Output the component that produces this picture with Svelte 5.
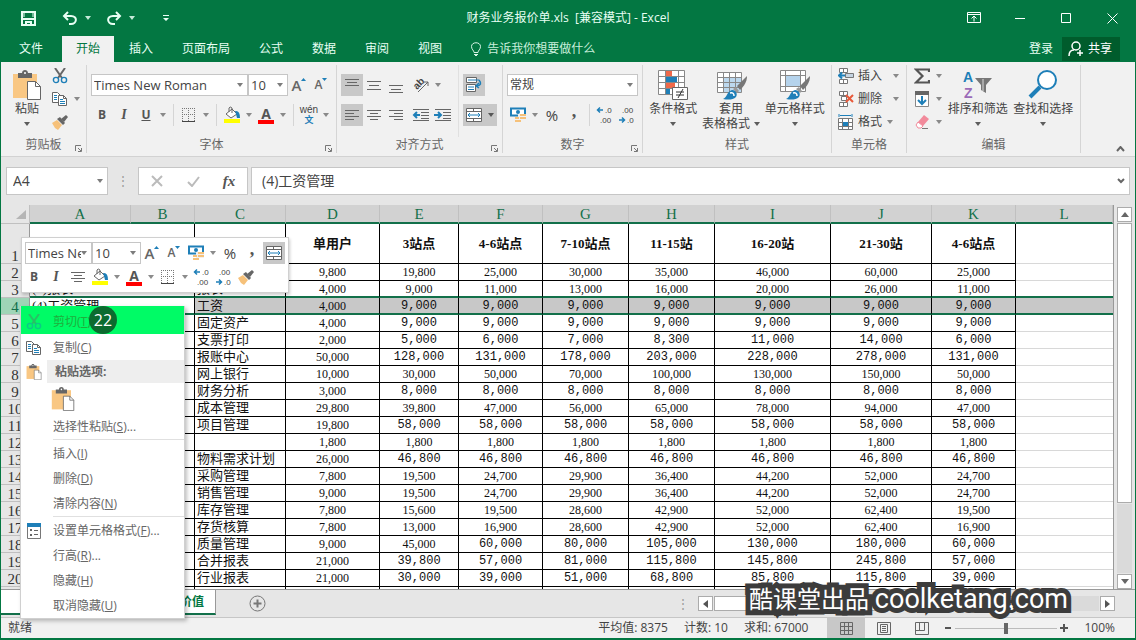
<script>
  let fontName = 'Times New Roman';
  let fontSize = '10';
  let numberFormat = '常规';
  let cellName = 'A4';
  let formula = '(4)工资管理';
  let zoom = 100;

  const tabs = ['文件', '开始', '插入', '页面布局', '公式', '数据', '审阅', '视图'];
  const letters = ['A', 'B', 'C', 'D', 'E', 'F', 'G', 'H', 'I', 'J', 'K', 'L'];
  const colWidths = [101, 64, 91, 94, 79, 84, 86, 86, 116, 101, 84];

  const heads = ['', '单用户', '3站点', '4-6站点', '7-10站点', '11-15站', '16-20站', '21-30站', '4-6站点'];

  // wide: number of the first column that is set in the fixed width face
  const rows = [
    { n: 2, name: '', cells: ['9,800', '19,800', '25,000', '30,000', '35,000', '46,000', '60,000', '25,000'] },
    { n: 3, a: '(3)报表', name: '报表', cells: ['4,000', '9,000', '11,000', '13,000', '16,000', '20,000', '26,000', '11,000'] },
    { n: 4, a: '(4)工资管理', name: '工资', wide: 1, cells: ['4,000', '9,000', '9,000', '9,000', '9,000', '9,000', '9,000', '9,000'] },
    { n: 5, name: '固定资产', wide: 1, cells: ['4,000', '9,000', '9,000', '9,000', '9,000', '9,000', '9,000', '9,000'] },
    { n: 6, name: '支票打印', wide: 1, cells: ['2,000', '5,000', '6,000', '7,000', '8,300', '11,000', '14,000', '6,000'] },
    { n: 7, name: '报账中心', wide: 1, cells: ['50,000', '128,000', '131,000', '178,000', '203,000', '228,000', '278,000', '131,000'] },
    { n: 8, name: '网上银行', cells: ['10,000', '30,000', '50,000', '70,000', '100,000', '130,000', '150,000', '50,000'] },
    { n: 9, name: '财务分析', wide: 1, cells: ['3,000', '8,000', '8,000', '8,000', '8,000', '8,000', '8,000', '8,000'] },
    { n: 10, name: '成本管理', cells: ['29,800', '39,800', '47,000', '56,000', '65,000', '78,000', '94,000', '47,000'] },
    { n: 11, name: '项目管理', wide: 1, cells: ['19,800', '58,000', '58,000', '58,000', '58,000', '58,000', '58,000', '58,000'] },
    { n: 12, name: '', cells: ['1,800', '1,800', '1,800', '1,800', '1,800', '1,800', '1,800', '1,800'] },
    { n: 13, name: '物料需求计划', wide: 1, cells: ['26,000', '46,800', '46,800', '46,800', '46,800', '46,800', '46,800', '46,800'] },
    { n: 14, name: '采购管理', cells: ['7,800', '19,500', '24,700', '29,900', '36,400', '44,200', '52,000', '24,700'] },
    { n: 15, name: '销售管理', cells: ['9,000', '19,500', '24,700', '29,900', '36,400', '44,200', '52,000', '24,700'] },
    { n: 16, name: '库存管理', cells: ['7,800', '15,600', '19,500', '28,600', '42,900', '52,000', '62,400', '19,500'] },
    { n: 17, name: '存货核算', cells: ['7,800', '13,000', '16,900', '28,600', '42,900', '52,000', '62,400', '16,900'] },
    { n: 18, name: '质量管理', wide: 2, cells: ['9,000', '45,000', '60,000', '80,000', '105,000', '130,000', '180,000', '60,000'] },
    { n: 19, name: '合并报表', wide: 1, cells: ['21,000', '39,800', '57,000', '81,000', '115,800', '145,800', '245,800', '57,000'] },
    { n: 20, name: '行业报表', wide: 1, cells: ['21,000', '30,000', '39,000', '51,000', '68,800', '85,800', '115,800', '39,000'] },
    { n: 21, name: '', cells: ['', '', '', '', '', '', '', ''] }
  ];
</script>

{#snippet arrow()}
  <svg class="arrow" width="6" height="4" viewBox="0 0 6 4"><path d="M0 0h6L3 4z" fill="currentColor" /></svg>
{/snippet}

{#snippet drop(label)}
  <button class="drop" aria-label={label}>{@render arrow()}</button>
{/snippet}

{#snippet lines(kind)}
  <svg width="16" height="16" viewBox="0 0 16 16" stroke="#666" fill="none">
    {#if kind === 'top'}<path d="M1 2.500h14M3 5.500h10M1 8.500h14" />
    {:else if kind === 'middle'}<path d="M1 4.500h14M3 8.500h10M1 12.500h14" />
    {:else if kind === 'bottom'}<path d="M1 8.500h14M3 12.500h10M1 15.500h14" />
    {:else if kind === 'left'}<path d="M1 3.500h14M1 6.500h9M1 9.500h14M1 12.500h9" />
    {:else if kind === 'right'}<path d="M1 3.500h14M6 6.500h9M1 9.500h14M6 12.500h9" />
    {:else}<path d="M1 3.500h14M4 6.500h8M1 9.500h14M4 12.500h8" />{/if}
  </svg>
{/snippet}

{#snippet indent(out)}
  <svg width="18" height="16" viewBox="0 0 18 16">
    <path d="M1 2.500h16M9 5.500h8M9 8.500h8M9 11.500h8M1 13.500h16" stroke="#666" fill="none" />
    {#if out}<path d="M8 8H2M5 5L2 8l3 3" stroke="#1e7fb8" stroke-width="2" fill="none" />
    {:else}<path d="M0 8h6M4 5l3 3-3 3" stroke="#1e7fb8" stroke-width="2" fill="none" />{/if}
  </svg>
{/snippet}

{#snippet scissors()}
  <svg width="16" height="16" viewBox="0 0 16 16" fill="none">
    <path d="M3 0l7 10M13 0L6 10" stroke="#666" stroke-width="2" />
    <circle cx="4" cy="12" r="2.600" stroke="#1e7fb8" stroke-width="1.400" />
    <circle cx="12" cy="12" r="2.600" stroke="#1e7fb8" stroke-width="1.400" />
  </svg>
{/snippet}

{#snippet copy()}
  <svg width="16" height="16" viewBox="0 0 16 16" stroke="#666">
    <path d="M.5 1.500h5l3 3v7h-8z" fill="#fff" />
    <path d="M2 4.500h3M2 6.500h3M2 8.500h3" stroke="#1e7fb8" />
    <path d="M6.500 4.500h5l3 3v7h-8z" fill="#fff" />
    <path d="M11.500 4.500v3h3" fill="none" />
    <path d="M8 8.500h3M8 10.500h5M8 12.500h5" stroke="#1e7fb8" />
  </svg>
{/snippet}

{#snippet brush()}
  <svg width="18" height="16" viewBox="0 0 18 16">
    <path d="M1 9l5-3 5 5-4 5-3-2z" fill="#f6c17a" />
    <path d="M6 5l3-2 5 6-2 2z" fill="#666" />
    <path d="M10 5l5-4 2 2-4 5z" fill="#666" />
  </svg>
{/snippet}

{#snippet paste(size)}
  <svg width={size} height={size} viewBox="0 0 28 30">
    <path d="M0 4h24v24H0z" fill="#f9c783" />
    <path d="M5 8V3h4c0-4 6-4 6 0h4v5z" fill="#666" />
    <circle cx="12" cy="3" r="1" fill="#fff" />
    <path d="M14.500 11.500h8l5 5v13h-13z" fill="#fff" stroke="#666" />
    <path d="M22.500 11.500v5h5" fill="none" stroke="#666" />
  </svg>
{/snippet}

{#snippet borders()}
  <svg width="14" height="14" viewBox="0 0 14 14" fill="none" stroke="#777">
    <path d="M.5 0v13M6.500 0v13M12.500 0v13M0 .5h13M0 6.500h13" stroke-dasharray="1 1" />
    <path d="M0 13.500h13" stroke="#444" />
  </svg>
{/snippet}

{#snippet fill()}
  <svg width="16" height="18" viewBox="0 0 16 18">
    <path d="M2 8l6-5 5 5-6 4z" fill="#fff" stroke="#666" />
    <path d="M5 6V2q1-2 3 0v5" fill="none" stroke="#666" />
    <path d="M11 5q5-1 5 7h-3l-1-4z" fill="#1e7fb8" />
    <path d="M0 13h16v4H0z" fill="#ff0" />
  </svg>
{/snippet}

{#snippet fontColor()}
  <span class="font-color">A</span>
{/snippet}

{#snippet sized(up)}
  <span class="sized" class:small={!up}>A</span>
  <svg class="tip" width="5" height="12" viewBox="0 0 5 12">
    {#if up}<path d="M0 3l2.500-3L5 3z" fill="#1e7fb8" />
    {:else}<path d="M0 0l2.500 3L5 0z" fill="#1e7fb8" />{/if}
  </svg>
{/snippet}

{#snippet currency()}
  <svg width="16" height="16" viewBox="0 0 16 16">
    <path d="M1 1.500h14v7H1z" fill="#fff" stroke="#1e7fb8" stroke-width="2" />
    <circle cx="8" cy="5" r="2" fill="#1e7fb8" />
    <path d="M8 7h8v6H8z" fill="#f1f1f1" />
    <path d="M10 7h6v2h-6zM10 10h6v2h-6zM5 10h4v2H5zM5 13h6v2H5z" fill="#f6c17a" />
  </svg>
{/snippet}

{#snippet decimals(more)}
  <svg width="18" height="20" viewBox="0 0 18 20" class="digits">
    {#if more}
      <text x="9" y="8">.0</text><text x="4" y="18">.00</text>
      <path d="M7 5H2M4 2.500L1.500 5 4 7.500" fill="none" stroke="#1e7fb8" stroke-width="1.500" />
    {:else}
      <text x="4" y="8">.00</text><text x="9" y="18">.0</text>
      <path d="M1 15h5M4 12.500L6.500 15 4 17.500" fill="none" stroke="#1e7fb8" stroke-width="1.500" />
    {/if}
  </svg>
{/snippet}

{#snippet merge()}
  <svg width="16" height="16" viewBox="0 0 16 16" fill="none">
    <path d="M.5 1.500h15v13H.5zM.5 4.500h15M.5 11.500h15M7.500 1.500v3M7.500 11.500v3" fill="#fff" stroke="#666" />
    <path d="M2 8h12M4 6L2 8l2 2M12 6l2 2-2 2" stroke="#1e7fb8" />
  </svg>
{/snippet}

{#snippet launcher(label)}
  <button class="launcher" aria-label={label}>
    <svg width="7" height="7" viewBox="0 0 7 7" fill="none" stroke="#777">
      <path d="M.5 6V.5H6M3 3l3 3M6.500 3v3.500H3" />
    </svg>
  </button>
{/snippet}

{#snippet tableBrush()}
  <path d="M31 6L21 16l3 4c4-4 7-8 7-14z" fill="#777" />
  <path d="M20 17l3 4-2 2-4-4z" fill="#999" />
  <path d="M7 29c4-1 4-8 9-9 4 0 6 4 4 7-3 3-8 3-13 2z" fill="#1e7fb8" />
  <path d="M14 23q4-1 4 3" stroke="#fff" stroke-width="1.500" fill="none" />
{/snippet}

<div class="app">
  <header class="title-bar">
    <div class="quick">
      <button class="q-save" aria-label="保存">
        <svg width="15" height="15" viewBox="0 0 15 15" fill="none" stroke="#e8fff4" stroke-width="2">
          <path d="M1 1h13v13H1z" /><path d="M1 8h13M5 14v-3h5v3" /><path d="M3 1v5M12 1v5" stroke-width="1" />
        </svg>
      </button>
      <button class="q-icon" aria-label="撤消">
        <svg width="16" height="15" viewBox="0 0 16 15" fill="none" stroke="#e8fff4" stroke-width="2">
          <path d="M6 1L2 5l4 4M2 5h7c7 0 6 8 0 8H7" />
        </svg>
      </button>
      {@render drop('撤消列表')}
      <button class="q-icon redo" aria-label="恢复">
        <svg width="16" height="15" viewBox="0 0 16 15" fill="none" stroke="#e8fff4" stroke-width="2">
          <path d="M10 1l4 4-4 4M14 5H7C0 5 1 13 7 13h2" />
        </svg>
      </button>
      {@render drop('恢复列表')}
      <button class="q-more" aria-label="自定义快速访问工具栏">
        <svg width="6" height="7" viewBox="0 0 6 7" fill="#e8fff4"><path d="M0 0h6v1H0zM0 3h6L3 6z" /></svg>
      </button>
    </div>
    <div class="doc-title">财务业务报价单.xls &nbsp;[兼容模式] - Excel</div>
    <div class="window-buttons">
      <button aria-label="功能区显示选项">
        <svg width="14" height="12" viewBox="0 0 14 12" fill="none" stroke="#fff"><path d="M.5 .5h13v10H.5zM.5 2.500h13M7 9.500v-5M4.500 6.500L7 4l2.500 2.500" /></svg>
      </button>
      <button aria-label="最小化"><svg width="11" height="11" viewBox="0 0 11 11"><path d="M0 5.500h10" stroke="#fff" /></svg></button>
      <button aria-label="最大化"><svg width="11" height="11" viewBox="0 0 11 11"><path d="M.5 .5h9v9h-9z" stroke="#fff" fill="none" /></svg></button>
      <button aria-label="关闭"><svg width="11" height="11" viewBox="0 0 11 11"><path d="M.5 .5l10 10M10.500 .5l-10 10" stroke="#fff" /></svg></button>
    </div>
  </header>

  <nav class="tabs">
    {#each tabs as tab}
      <button class="tab" class:active={tab === '开始'} class:file={tab === '文件'}>{tab}</button>
    {/each}
    <button class="tell">
      <svg width="10" height="14" viewBox="0 0 10 14" fill="none" stroke="#d8f5e6"><path d="M3 10.500c0-2-2.500-3-2.500-6 0-5 9-5 9 0 0 3-2.500 4-2.500 6zM3 12.500h4M4 13.500h2" /></svg>
      告诉我你想要做什么
    </button>
    <button class="login">登录</button>
    <button class="share">
      <svg width="16" height="16" viewBox="0 0 16 16" fill="none" stroke="#fff" stroke-width="1.500"><circle cx="8" cy="5" r="4" /><path d="M1 15c0-4 2-6 5-6M12 9v6M9 12h6" /></svg>
      共享
    </button>
  </nav>

  <section class="ribbon">
    <div class="group clipboard">
      <div class="tools">
        <button class="big">
          <span class="pic">{@render paste(30)}</span>
          <span>粘贴</span>
          <span class="under">{@render arrow()}</span>
        </button>
        <div class="stack">
          <div class="line"><button class="btn" aria-label="剪切">{@render scissors()}</button></div>
          <div class="line"><button class="btn" aria-label="复制">{@render copy()}</button>{@render drop('复制选项')}</div>
          <div class="line"><button class="btn" aria-label="格式刷">{@render brush()}</button></div>
        </div>
      </div>
      <div class="caption">剪贴板{@render launcher('剪贴板设置')}</div>
    </div>

    <div class="group font">
      <div class="tools two">
        <div class="line">
          <span class="combo font-name"><select bind:value={fontName} aria-label="字体"><option>Times New Roman</option></select>{@render arrow()}</span>
          <span class="combo font-size"><select bind:value={fontSize} aria-label="字号"><option>10</option></select>{@render arrow()}</span>
          <button class="btn" aria-label="增大字号">{@render sized(true)}</button>
          <button class="btn" aria-label="减小字号">{@render sized(false)}</button>
        </div>
        <div class="line">
          <button class="btn"><b>B</b></button>
          <button class="btn"><i>I</i></button>
          <button class="btn"><u>U</u></button>
          {@render drop('下划线')}
          <span class="sep"></span>
          <button class="btn" aria-label="边框">{@render borders()}</button>
          {@render drop('边框选项')}
          <span class="sep"></span>
          <button class="btn" aria-label="填充颜色">{@render fill()}</button>
          {@render drop('填充颜色选项')}
          <button class="btn">{@render fontColor()}</button>
          {@render drop('字体颜色选项')}
          <span class="sep"></span>
          <button class="btn pinyin"><span>wén</span><span class="han">文</span></button>
          {@render drop('拼音选项')}
        </div>
      </div>
      <div class="caption">字体{@render launcher('字体设置')}</div>
    </div>

    <div class="group align">
      <div class="tools">
        <div class="pair left-part">
          <div class="line">
            <button class="btn on" aria-label="顶端对齐">{@render lines('top')}</button>
            <button class="btn" aria-label="垂直居中">{@render lines('middle')}</button>
            <button class="btn" aria-label="底端对齐">{@render lines('bottom')}</button>
            <button class="btn gap" aria-label="方向">
              <svg class="orient" width="20" height="20" viewBox="0 0 20 20">
                <text x="3" y="12" transform="rotate(-45 8 10)">ab</text>
                <path d="M7 17L17 7M13 7h4v4" stroke="#666" fill="none" />
              </svg>
            </button>
            {@render drop('方向选项')}
          </div>
          <div class="line">
            <button class="btn on" aria-label="左对齐">{@render lines('left')}</button>
            <button class="btn" aria-label="居中">{@render lines('center')}</button>
            <button class="btn" aria-label="右对齐">{@render lines('right')}</button>
            <button class="btn gap" aria-label="减少缩进量">{@render indent(true)}</button>
            <button class="btn" aria-label="增加缩进量">{@render indent(false)}</button>
          </div>
        </div>
        <div class="pair right-part">
          <div class="line">
            <button class="btn on" aria-label="自动换行">
              <svg width="16" height="16" viewBox="0 0 16 16">
                <path d="M.5 .5h10v5H.5zM.5 7.500h9v7h-9z" fill="#fff" stroke="#666" />
                <path d="M2 3h11M2 10h6M2 12.500h6" stroke="#1e7fb8" />
                <path d="M13 3q4 5-2 6M13 6l-3 3 3 2" stroke="#1e7fb8" stroke-width="1.500" fill="none" />
              </svg>
            </button>
          </div>
          <div class="line">
            <button class="btn on" aria-label="合并后居中">{@render merge()}</button>
            <button class="drop on" aria-label="合并选项">{@render arrow()}</button>
          </div>
        </div>
      </div>
      <div class="caption">对齐方式{@render launcher('对齐设置')}</div>
    </div>

    <div class="group number">
      <div class="tools two">
        <div class="line">
          <span class="combo number-format"><select bind:value={numberFormat} aria-label="数字格式"><option>常规</option></select>{@render arrow()}</span>
        </div>
        <div class="line">
          <button class="btn" aria-label="会计数字格式">{@render currency()}</button>
          {@render drop('会计格式选项')}
          <button class="btn percent">%</button>
          <button class="btn comma">,</button>
          <span class="sep"></span>
          <button class="btn" aria-label="增加小数位数">{@render decimals(true)}</button>
          <button class="btn" aria-label="减少小数位数">{@render decimals(false)}</button>
        </div>
      </div>
      <div class="caption">数字{@render launcher('数字设置')}</div>
    </div>

    <div class="group styles">
      <div class="tools">
        <button class="big">
          <span class="pic">
            <svg width="31" height="30" viewBox="0 0 31 30">
              <path d="M.5 .5h26v24H.5z" fill="#fff" />
              <path d="M8 1h6v5H8zM8 13h9v5H8z" fill="#f0694a" />
              <path d="M8 7h11v5H8zM8 19h4v5H8z" fill="#1e7fb8" />
              <path d="M.5 .5h26v24H.5zM.5 6.500h26M.5 12.500h26M.5 18.500h26M7.500 .5v24M20.500 .5v24" fill="none" stroke="#888" />
              <path d="M14.500 17.500h15v12h-15z" fill="#fff" stroke="#666" />
              <path d="M18 22h8M18 25h8M25 19l-5 9" stroke="#333" />
            </svg>
          </span>
          <span>条件格式</span>
          <span class="under">{@render arrow()}</span>
        </button>
        <button class="big">
          <span class="pic">
            <svg width="31" height="30" viewBox="0 0 31 30">
              <path d="M1.500 2.500h24v20h-24z" fill="#fff" />
              <path d="M8 8h18v14H8z" fill="#bcd8ee" />
              <path d="M1.500 2.500h24v20h-24zM1.500 7.500h24M1.500 12.500h24M1.500 17.500h24M7.500 2.500v20M13.500 2.500v20M19.500 2.500v20" fill="none" stroke="#888" />
              {@render tableBrush()}
            </svg>
          </span>
          <span>套用</span>
          <span class="under">表格格式 {@render arrow()}</span>
        </button>
        <button class="big">
          <span class="pic">
            <svg width="31" height="30" viewBox="0 0 31 30">
              <path d="M1.500 .5h25v21h-25z" fill="#fff" />
              <path d="M1.500 .5h25v21h-25zM1.500 5.500h25M1.500 16.500h25M6.500 .5v21M21.500 .5v21" fill="none" stroke="#888" />
              <path d="M7 6h14v10H7z" fill="#b5d3ec" />
              {@render tableBrush()}
            </svg>
          </span>
          <span>单元格样式</span>
          <span class="under">{@render arrow()}</span>
        </button>
      </div>
      <div class="caption">样式</div>
    </div>

    <div class="group cells">
      <div class="tools">
        <div class="stack">
          <div class="line">
            <button class="row-btn">
              <svg width="16" height="16" viewBox="0 0 16 16" fill="#fff" stroke="#777">
                <path d="M1.500 .5h8v4h-8zM5.500 .5v4M1.500 11.500h8v4h-8zM5.500 11.500v4" /><path d="M7.500 5.500h8v4h-8z" fill="#c5d4e2" />
                <path d="M7 7.500H1M4 4.500l-3 3 3 3" stroke="#1e7fb8" stroke-width="2" fill="none" />
              </svg>
              插入
            </button>
            {@render drop('插入选项')}
          </div>
          <div class="line">
            <button class="row-btn">
              <svg width="16" height="16" viewBox="0 0 16 16" fill="#fff" stroke="#777">
                <path d="M1.500 .5h8v4h-8zM5.500 .5v4M1.500 11.500h8v4h-8zM5.500 11.500v4M3.500 5.500h5v4h-5z" />
                <path d="M8 4l7 7M15 4l-7 7" stroke="#e8593a" stroke-width="2" />
              </svg>
              删除
            </button>
            {@render drop('删除选项')}
          </div>
          <div class="line format">
            <button class="row-btn">
              <svg width="16" height="16" viewBox="0 0 16 16" fill="#fff" stroke="#777">
                <path d="M.5 4.500h14v11H.5zM.5 8.500h14M.5 12.500h14M4.500 4.500v11M10.500 4.500v11" />
                <path d="M5 8h5v4H5z" fill="#1e7fb8" stroke="none" />
                <path d="M1 0v3M14 0v3M2 1.500h11" stroke="#1e7fb8" />
              </svg>
              格式
            </button>
            {@render drop('格式选项')}
          </div>
        </div>
      </div>
      <div class="caption">单元格</div>
    </div>

    <div class="group edit">
      <div class="tools">
        <div class="stack">
          <div class="line">
            <button class="btn" aria-label="自动求和"><svg width="16" height="16" viewBox="0 0 16 16"><path d="M15 4V1.500H2L8.500 8 2 14.500h13V12" fill="none" stroke="#555" stroke-width="2.200" /></svg></button>
            {@render drop('求和选项')}
          </div>
          <div class="line">
            <button class="btn" aria-label="填充"><svg width="16" height="16" viewBox="0 0 16 16"><path d="M1.500 1.500h13v14h-13z" fill="#fff" stroke="#888" /><path d="M1 0h14v4H1z" fill="#666" /><path d="M8 5v8M4 9l4 4 4-4" fill="none" stroke="#1e7fb8" stroke-width="2" /></svg></button>
            {@render drop('填充选项')}
          </div>
          <div class="line">
            <button class="btn" aria-label="清除"><svg width="16" height="16" viewBox="0 0 16 16"><path d="M4 8l6-7 5 4-6 7z" fill="#f28a9b" /><path d="M4 8l5 4-2 2H4l-2-3z" fill="#fff" stroke="#f28a9b" /><path d="M8 14.500h6" stroke="#777" /></svg></button>
            {@render drop('清除选项')}
          </div>
        </div>
        <button class="big">
          <span class="pic">
            <svg class="sort" width="31" height="30" viewBox="0 0 31 30">
              <text x="1" y="12" fill="#1e7fb8">A</text>
              <text x="2" y="28" fill="#9b6bb8">Z</text>
              <path d="M13 8h17l-6 7v8l-5-3v-5z" fill="#777" /><path d="M21 9v12" stroke="#ddd" />
            </svg>
          </span>
          <span>排序和筛选</span>
          <span class="under">{@render arrow()}</span>
        </button>
        <button class="big">
          <span class="pic">
            <svg width="31" height="30" viewBox="0 0 31 30">
              <path d="M2 27L12 17" stroke="#1e7fb8" stroke-width="4" />
              <circle cx="19" cy="10" r="9" fill="#fff" stroke="#1e7fb8" stroke-width="2" />
            </svg>
          </span>
          <span>查找和选择</span>
          <span class="under">{@render arrow()}</span>
        </button>
      </div>
      <div class="caption">编辑</div>
    </div>
    <button class="collapse" aria-label="折叠功能区"><svg width="9" height="6" viewBox="0 0 9 6"><path d="M1 5l3.500-4L8 5" fill="none" stroke="#666" stroke-width="2" /></svg></button>
  </section>

  <section class="formula-bar">
    <span class="combo name-box"><input bind:value={cellName} aria-label="名称框" />{@render arrow()}</span>
    <span class="dots">⋮</span>
    <div class="fx">
      <button aria-label="取消"><svg width="12" height="12" viewBox="0 0 12 12"><path d="M1 1l10 10M11 1L1 11" stroke="#bbb" stroke-width="2" /></svg></button>
      <button aria-label="输入"><svg width="13" height="11" viewBox="0 0 13 11"><path d="M1 6l4 4 7-9" stroke="#bbb" stroke-width="2" fill="none" /></svg></button>
      <button class="fn"><i>fx</i></button>
    </div>
    <span class="combo formula">
      <input bind:value={formula} aria-label="编辑栏" />
      <svg width="8" height="6" viewBox="0 0 8 6"><path d="M1 1l3 3 3-3" fill="none" stroke="#666" stroke-width="2" /></svg>
    </span>
  </section>

  <main class="sheet">
    <div class="cells-area">
      <table>
        <colgroup>
          <col style="width: 29px" />
          {#each colWidths as w}<col style="width: {w}px" />{/each}
          <col />
        </colgroup>
        <thead>
          <tr>
            <th class="corner"><svg width="10" height="9" viewBox="0 0 10 9"><path d="M10 0v9H0z" fill="#b5b5b5" /></svg></th>
            {#each letters as l}<th>{l}</th>{/each}
          </tr>
        </thead>
        <tbody>
          <tr class="first">
            <th>1</th>
            <td colspan="2"></td>
            {#each heads as h}<td class="head">{h}</td>{/each}
            <td class="blank"></td>
          </tr>
          {#each rows as r}
            <tr class:selected={r.n === 4} class:above={r.n === 3}>
              <th>{r.n < 21 ? r.n : ''}</th>
              <td colspan="2" class="text">{r.a ?? ''}</td>
              <td class="text">{r.name}</td>
              {#each r.cells as c, i}
                <td class:wide={r.wide && i >= r.wide}>{c}</td>
              {/each}
              <td class="blank"></td>
            </tr>
          {/each}
        </tbody>
      </table>
    </div>
    <div class="v-scroll">
      <button aria-label="向上滚动"><svg width="8" height="5" viewBox="0 0 8 5"><path d="M0 5h8L4 0z" fill="#666" /></svg></button>
      <span class="thumb"></span>
      <span class="rest"></span>
      <button aria-label="向下滚动"><svg width="8" height="5" viewBox="0 0 8 5"><path d="M0 0h8L4 5z" fill="#666" /></svg></button>
    </div>
  </main>

  <footer class="sheet-tabs">
    <button class="sheet-tab">价值</button>
    <button class="add" aria-label="新工作表">
      <svg width="17" height="17" viewBox="0 0 17 17" fill="none" stroke="#777"><circle cx="8.500" cy="8.500" r="7.500" /><path d="M4.500 8.500h8M8.500 4.500v8" stroke-width="2" /></svg>
    </button>
    <span class="dots">⋮</span>
    <div class="h-scroll">
      <button aria-label="向左滚动"><svg width="5" height="8" viewBox="0 0 5 8"><path d="M5 0v8L0 4z" fill="#555" /></svg></button>
      <span class="thumb"></span>
      <span class="rest"></span>
      <button aria-label="向右滚动"><svg width="5" height="8" viewBox="0 0 5 8"><path d="M0 0v8l5-4z" fill="#555" /></svg></button>
    </div>
  </footer>

  <footer class="status">
    <span class="ready">就绪</span>
    <span>平均值: 8375</span>
    <span>计数: 10</span>
    <span>求和: 67000</span>
    <div class="views">
      <button class="on" aria-label="普通"><svg width="13" height="13" viewBox="0 0 13 13" fill="none" stroke="#666"><path d="M.5 .5h12v12H.5zM.5 4.500h12M.5 8.500h12M4.500 .5v12M8.500 .5v12" /></svg></button>
      <button aria-label="页面布局"><svg width="14" height="13" viewBox="0 0 14 13" fill="none" stroke="#666"><path d="M.5 .5h13v12H.5zM3.500 2.500h7v8h-7zM5 4.500h4M5 6.500h4M5 8.500h4" /></svg></button>
      <button aria-label="分页预览"><svg width="14" height="13" viewBox="0 0 14 13" fill="none" stroke="#666"><path d="M.5 .5h13v12H.5zM4.500 .5v8M9.500 .5v8M.5 8.500h9" /></svg></button>
    </div>
    <button class="step" aria-label="缩小"><svg width="8" height="8" viewBox="0 0 8 8"><path d="M1 4h6" stroke="#555" stroke-width="2" /></svg></button>
    <input type="range" min="0" max="200" bind:value={zoom} aria-label="显示比例" />
    <button class="step" aria-label="放大"><svg width="8" height="8" viewBox="0 0 8 8"><path d="M0 4h8M4 0v8" stroke="#555" stroke-width="2" /></svg></button>
    <span class="zoom-value">{zoom}%</span>
  </footer>

  <div class="mini">
    <div class="line">
      <span class="combo mini-font"><select bind:value={fontName} aria-label="浮动工具栏字体"><option>Times New Roman</option></select>{@render arrow()}</span>
      <span class="combo mini-size"><select bind:value={fontSize} aria-label="浮动工具栏字号"><option>10</option></select>{@render arrow()}</span>
      <button class="btn" aria-label="增大字号">{@render sized(true)}</button>
      <button class="btn" aria-label="减小字号">{@render sized(false)}</button>
      <button class="btn" aria-label="会计数字格式">{@render currency()}</button>
      {@render drop('会计格式选项')}
      <button class="btn percent">%</button>
      <button class="btn comma">,</button>
      <button class="btn on" aria-label="合并后居中">{@render merge()}</button>
    </div>
    <div class="line second">
      <button class="btn"><b>B</b></button>
      <button class="btn"><i>I</i></button>
      <button class="btn" aria-label="居中">{@render lines('center')}</button>
      <button class="btn" aria-label="填充颜色">{@render fill()}</button>
      {@render drop('填充颜色选项')}
      <button class="btn">{@render fontColor()}</button>
      {@render drop('字体颜色选项')}
      <button class="btn" aria-label="边框">{@render borders()}</button>
      {@render drop('边框选项')}
      <button class="btn" aria-label="增加小数位数">{@render decimals(true)}</button>
      <button class="btn" aria-label="减少小数位数">{@render decimals(false)}</button>
      <button class="btn" aria-label="格式刷">{@render brush()}</button>
    </div>
  </div>

  <div class="menu">
    <button class="item cut"><span class="ico">{@render scissors()}</span>剪切(<u>T</u>)</button>
    <button class="item"><span class="ico">{@render copy()}</span>复制(<u>C</u>)</button>
    <div class="item-head"><span class="ico">{@render paste(16)}</span><span class="name">粘贴选项:</span></div>
    <div class="paste-row"><button aria-label="粘贴">{@render paste(24)}</button></div>
    <button class="item"><span class="ico"></span>选择性粘贴(<u>S</u>)...</button>
    <hr />
    <button class="item"><span class="ico"></span>插入(<u>I</u>)</button>
    <button class="item"><span class="ico"></span>删除(<u>D</u>)</button>
    <button class="item"><span class="ico"></span>清除内容(<u>N</u>)</button>
    <hr />
    <button class="item">
      <span class="ico">
        <svg width="14" height="16" viewBox="0 0 14 16"><path d="M.5 .5h13v15H.5z" fill="#fff" stroke="#777" /><path d="M0 0h14v4H0z" fill="#1e7fb8" /><path d="M3 6h2v2H3zM3 11h2v2H3zM7 7h4v1H7zM7 11h4v1H7z" fill="#666" /></svg>
      </span>
      设置单元格格式(<u>F</u>)...
    </button>
    <button class="item"><span class="ico"></span>行高(<u>R</u>)...</button>
    <button class="item"><span class="ico"></span>隐藏(<u>H</u>)</button>
    <button class="item"><span class="ico"></span>取消隐藏(<u>U</u>)</button>
    <span class="marker">22</span>
  </div>

  <div class="brand">酷课堂出品 <span>coolketang.com</span></div>
</div>

<style>
  :global(body) {
    margin: 0;
  }
  .app {
    position: relative;
    box-sizing: border-box;
    display: flex;
    flex-direction: column;
    height: 100vh;
    overflow: hidden;
    border: 1px solid #037742;
    border-width: 0 1px 2px;
    background: #e6e6e6;
    color: #444;
    font: 12px/16px 'Open Sans', 'Noto Sans CJK SC', sans-serif;
  }
  button,
  input,
  select {
    margin: 0;
    padding: 0;
    border: 0;
    background: none;
    color: inherit;
    font: inherit;
  }
  svg {
    display: block;
    flex: none;
  }

  .title-bar {
    display: grid;
    grid-template-columns: 1fr auto 1fr;
    align-items: center;
    height: 36px;
    background: #037742;
    color: #e8fff4;
  }
  .quick,
  .window-buttons,
  .quick button,
  .window-buttons button {
    display: flex;
    align-items: center;
    justify-content: center;
  }
  .quick {
    justify-content: flex-start;
    padding-left: 16px;
  }
  .quick .q-save {
    width: 22px;
  }
  .quick .q-icon {
    width: 22px;
    margin-left: 20px;
  }
  .quick .redo {
    margin-left: 8px;
  }
  .quick .q-more {
    width: 22px;
    margin-left: 16px;
  }
  .window-buttons {
    justify-content: flex-end;
  }
  .window-buttons button {
    width: 46px;
    height: 30px;
  }

  .tabs {
    display: flex;
    align-items: center;
    gap: 1px;
    height: 26px;
    padding: 0 15px 0 4px;
    background: #037742;
    color: #e8fff4;
  }
  .tab {
    height: 26px;
    padding: 0 14px;
  }
  .tab.file {
    margin-right: 4px;
  }
  .tab.active {
    background: #f1f1f1;
    color: #037742;
  }
  .tell {
    display: flex;
    align-items: center;
    gap: 6px;
    margin-left: 14px;
    color: #c9efdc;
  }
  .login {
    margin-left: auto;
    margin-right: 8px;
  }
  .share {
    display: flex;
    align-items: center;
    gap: 4px;
    height: 24px;
    padding: 0 8px 0 6px;
    background: #005c2c;
    color: #fff;
  }

  .ribbon {
    display: flex;
    height: 94px;
    border-bottom: 1px solid #d2d2d2;
    background: #f1f1f1;
  }
  .group {
    display: flex;
    flex-direction: column;
    box-sizing: border-box;
    margin: 3px 0;
    padding: 0 4px;
    border-right: 1px solid #d5d5d5;
  }
  .clipboard { width: 86px; }
  .font { width: 250px; }
  .align { width: 166px; }
  .number { width: 140px; }
  .styles { width: 189px; padding: 0 4px; }
  .cells { width: 75px; }
  .edit { width: 174px; }
  .tools {
    display: flex;
    flex: 1;
  }
  .two {
    flex-direction: column;
  }
  .pair,
  .two {
    display: flex;
    flex-direction: column;
    gap: 8px;
    padding-top: 9px;
  }
  .left-part {
    width: 117px;
  }
  .right-part {
    padding-left: 4px;
    border-left: 1px solid #e0e0e0;
  }
  .stack {
    display: flex;
    flex-direction: column;
    gap: 1px;
  }
  .line {
    display: flex;
    align-items: center;
    height: 22px;
  }
  .caption {
    position: relative;
    height: 16px;
    color: #666;
    text-align: center;
  }
  .launcher {
    position: absolute;
    right: 0;
    bottom: 1px;
  }
  .btn,
  .drop {
    position: relative;
    display: flex;
    flex: none;
    align-items: center;
    justify-content: center;
    width: 22px;
    height: 22px;
  }
  .drop {
    width: 12px;
    color: #777;
  }
  .arrow {
    opacity: 0.85;
  }
  .quick .drop {
    width: 14px;
    color: #e8fff4;
  }
  .on {
    background: #c8c8c8;
    color: #444;
  }
  .gap {
    margin-left: 3px;
  }
  .sep {
    width: 1px;
    height: 22px;
    margin: 0 4px;
    background: #d5d5d5;
  }
  .btn b,
  .btn i,
  .btn u {
    color: #555;
    font-weight: bold;
  }
  .btn i {
    font-family: 'Liberation Serif', serif;
    font-size: 14px;
  }
  .percent {
    font-size: 15px;
  }
  .comma {
    align-items: flex-start;
    height: 26px;
    color: #555;
    font: bold 18px/18px 'Liberation Serif', serif;
  }
  .sized {
    color: #666;
    font-size: 15px;
    font-weight: 600;
  }
  .sized.small {
    font-size: 12px;
  }
  .tip {
    align-self: flex-start;
    margin-top: 4px;
  }
  .font-color {
    width: 16px;
    border-bottom: 4px solid #f00;
    color: #555;
    font-size: 14px;
    font-weight: bold;
    line-height: 13px;
  }
  .pinyin {
    flex-direction: column;
    font: 10px/10px 'Liberation Sans', sans-serif;
  }
  .pinyin .han {
    color: #1e7fb8;
    font: bold 9px/10px 'Noto Sans CJK SC', sans-serif;
  }
  .digits text,
  .orient text,
  .sort text {
    font-family: 'Liberation Sans', sans-serif;
    font-size: 8px;
    fill: #444;
  }
  .orient text {
    font-size: 10px;
    font-weight: bold;
  }
  .sort text {
    font-size: 14px;
    font-weight: bold;
    fill: #1e7fb8;
  }
  .sort text:nth-of-type(2) {
    fill: #9b6bb8;
  }
  .combo {
    display: flex;
    flex: none;
    align-items: center;
    box-sizing: border-box;
    height: 22px;
    padding: 0 4px 0 2px;
    border: 1px solid #c6c6c6;
    background: #fff;
    color: #666;
  }
  .combo select,
  .combo input {
    flex: 1;
    min-width: 0;
    appearance: none;
    outline: none;
    color: #444;
    font-size: 13px;
    line-height: 18px;
  }
  .font-name { width: 157px; }
  .font-size { width: 40px; }
  .mini-font { width: 67px; }
  .mini-size { width: 49px; }
  .number-format { width: 131px; }
  .number-format select {
    font-size: 12px;
  }
  .big {
    display: flex;
    flex: 1 0 auto;
    flex-direction: column;
    align-items: center;
    align-self: flex-start;
    padding: 5px 1px 0;
  }
  .clipboard .big {
    flex: none;
    width: 44px;
  }
  .pic {
    display: flex;
    justify-content: center;
    height: 31px;
  }
  .under {
    display: flex;
    align-items: center;
    gap: 4px;
    height: 14px;
  }
  .cells .stack {
    width: 100%;
  }
  .cells .line {
    justify-content: space-between;
  }
  .cells .format {
    padding-right: 6px;
  }
  .row-btn {
    display: flex;
    align-items: center;
    gap: 4px;
    padding-left: 2px;
  }
  .collapse {
    align-self: flex-end;
    margin: 0 10px 4px auto;
  }

  .formula-bar {
    display: flex;
    align-items: center;
    height: 48px;
    padding: 0 5px;
  }
  .formula-bar .combo {
    height: 28px;
    padding: 0 4px 0 6px;
  }
  .formula-bar .combo input {
    font-size: 14px;
  }
  .name-box {
    width: 102px;
  }
  .dots {
    width: 30px;
    color: #999;
    text-align: center;
  }
  .fx {
    display: flex;
    box-sizing: border-box;
    width: 110px;
    height: 28px;
    margin-right: 3px;
    border: 1px solid #c6c6c6;
    background: #fff;
  }
  .fx button {
    display: flex;
    flex: 1;
    align-items: center;
    justify-content: center;
  }
  .fx .fn {
    color: #555;
    font: bold 15px/16px 'Liberation Serif', serif;
  }
  .formula-bar .formula {
    flex: 1;
    padding-left: 10px;
  }

  .sheet {
    display: flex;
    flex: 1;
    min-height: 0;
  }
  .cells-area {
    flex: 1;
    overflow: hidden;
    border-right: 1px solid #999;
    background: #fff;
  }
  table {
    width: 100%;
    table-layout: fixed;
    border-collapse: separate;
    border-spacing: 0;
    color: #111;
  }
  td,
  th {
    box-sizing: border-box;
    height: 17px;
    padding: 0;
    border: 0 solid #000;
    border-width: 0 1px 1px 0;
    overflow: hidden;
    line-height: 14px;
    white-space: nowrap;
    text-align: center;
    font-family: 'Liberation Serif', 'Noto Sans CJK SC', serif;
    font-size: 12px;
  }
  th {
    border-color: #c0c0c0;
    background: #e6e6e6;
    color: #333;
    font-size: 15px;
    font-weight: normal;
  }
  tbody th {
    border-right-color: #999;
    vertical-align: bottom;
  }
  thead th {
    height: 19px;
    border-bottom: 2px solid #12704a;
    background: #d2d2d2;
    color: #12704a;
    line-height: 16px;
  }
  thead .corner {
    border-bottom: 1px solid #c0c0c0;
    background: #e6e6e6;
  }
  .corner svg {
    margin-left: auto;
    margin-right: 3px;
  }
  .first td,
  .first th {
    height: 40px;
  }
  td.head {
    font-size: 13px;
    font-weight: bold;
  }
  td.text {
    padding-left: 2px;
    font-size: 13px;
    text-align: left;
  }
  td.wide {
    font-family: 'Liberation Mono', monospace;
  }
  td.blank {
    border-right: 0;
    border-color: #d8d8d8;
  }
  .above td,
  .selected td,
  .above td.blank,
  .selected td.blank {
    border-bottom: 2px solid #12704a;
  }
  .selected td {
    background: #c8c8c8;
  }
  .selected td:nth-child(2) {
    background: #fff;
  }
  .selected th {
    background: #9fd5b7;
    color: #12704a;
  }
  .v-scroll {
    display: flex;
    flex-direction: column;
    gap: 1px;
    width: 15px;
    margin: 2px 3px 0;
  }
  .v-scroll button,
  .h-scroll button {
    display: flex;
    align-items: center;
    justify-content: center;
    box-sizing: border-box;
    width: 15px;
    height: 15px;
    border: 1px solid #ababab;
    background: #fff;
  }
  .thumb {
    flex: 4;
    border: 1px solid #ababab;
    background: #fff;
  }
  .rest {
    flex: 1;
    background: #dadada;
  }

  .sheet-tabs {
    display: flex;
    align-items: center;
    height: 27px;
    border-top: 1px solid #999;
    padding-right: 20px;
  }
  .sheet-tab {
    box-sizing: border-box;
    align-self: flex-start;
    width: 215px;
    height: 25px;
    padding-right: 11px;
    border-right: 1px solid #999;
    border-bottom: 2px solid #12704a;
    background: #fff;
    color: #037742;
    font-weight: bold;
    text-align: right;
  }
  .add {
    margin-left: 33px;
    margin-right: auto;
  }
  .h-scroll {
    display: flex;
    flex: 0 1 417px;
    gap: 1px;
    height: 15px;
  }

  .status {
    display: flex;
    align-items: center;
    gap: 16px;
    height: 20px;
    padding-right: 20px;
    border-top: 1px solid #c6c6c6;
    background: #f1f1f1;
  }
  .ready {
    margin-left: 7px;
    margin-right: auto;
  }
  .views {
    display: flex;
    align-self: stretch;
    margin-left: 3px;
  }
  .views button {
    display: flex;
    align-items: center;
    justify-content: center;
    width: 38px;
  }
  .step {
    width: 8px;
    margin: 0 -13px;
  }
  .status input {
    width: 102px;
    height: 16px;
    appearance: none;
    background: linear-gradient(#bbb, #bbb) center / 100% 1px no-repeat;
  }
  .status input::-webkit-slider-thumb {
    appearance: none;
    width: 4px;
    height: 11px;
    background: #666;
  }
  .zoom-value {
    margin-left: 13px;
  }

  .mini {
    position: absolute;
    left: 20px;
    top: 237px;
    box-sizing: border-box;
    width: 268px;
    height: 56px;
    padding: 4px 0 0 3px;
    border: 1px solid #d0d0d0;
    background: #fff;
    box-shadow: 1px 2px 3px rgba(0, 0, 0, 0.2);
  }
  .mini .second {
    margin: 2px 0 0 -2px;
  }

  .menu {
    position: absolute;
    left: 19px;
    top: 306px;
    box-sizing: border-box;
    width: 165px;
    padding: 3px 0 0;
    border: 1px solid #d0d0d0;
    background: #fff;
    box-shadow: 2px 2px 4px rgba(0, 0, 0, 0.25);
    color: #666;
  }
  .item {
    display: flex;
    align-items: center;
    width: 100%;
    height: 25px;
  }
  .ico {
    display: flex;
    flex: none;
    justify-content: center;
    width: 26px;
    margin-right: 6px;
  }
  .cut {
    box-sizing: border-box;
    height: 28px;
    margin-top: -4px;
    padding-top: 4px;
    background: #00fb66;
    color: #1fae3c;
  }
  .cut svg {
    opacity: 0.4;
  }
  .cut + .item {
    margin-top: 1px;
  }
  .item-head {
    display: flex;
    align-items: center;
    height: 23px;
  }
  .item-head .ico {
    margin-right: 0;
  }
  .item-head .name {
    flex: 1;
    padding-left: 8px;
    background: #eee;
    font-weight: bold;
    line-height: 23px;
  }
  .paste-row {
    height: 31px;
    padding: 4px 0 0 30px;
    box-sizing: border-box;
  }
  hr {
    height: 1px;
    margin: 0 0 1px 32px;
    border: 0;
    background: #e0e0e0;
  }
  .marker {
    position: absolute;
    left: 68px;
    top: -1px;
    width: 28px;
    height: 28px;
    border-radius: 50%;
    background: #0b6b2f;
    color: #fff;
    font-size: 16px;
    line-height: 28px;
    text-align: center;
  }

  .brand {
    position: absolute;
    right: 67px;
    bottom: 20px;
    color: #fff;
    font: 24px/36px Roboto, 'Noto Sans CJK SC', sans-serif;
    white-space: nowrap;
    -webkit-text-stroke: 10px #3c3c3c;
    paint-order: stroke fill;
    stroke-linejoin: round;
  }
  .brand span {
    font-size: 27px;
  }
</style>
